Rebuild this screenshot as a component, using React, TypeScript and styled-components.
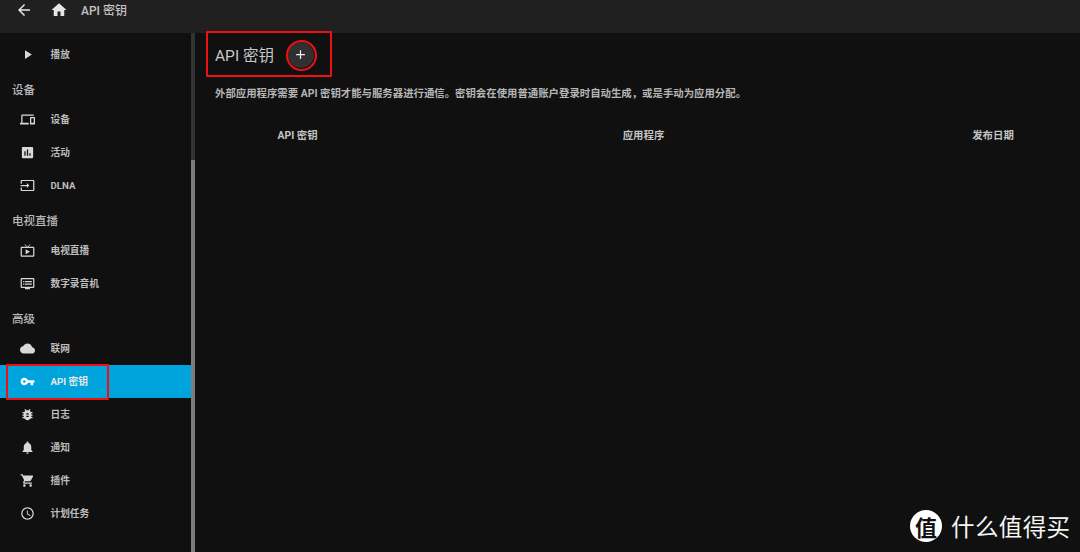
import React from "react";
import styled, { createGlobalStyle } from "styled-components";

const Global = createGlobalStyle`
  html, body { margin: 0; padding: 0; background: #101010; }
  body { font-family: Roboto, "Noto Sans CJK SC", sans-serif; color: #d0d0d0; overflow: hidden; }
`;

const Page = styled.div`
  position: relative;
  width: 1080px;
  height: 552px;
  overflow: hidden;
  display: flex;
  flex-direction: column;
  background: #101010;
`;

const TopBar = styled.header`
  height: 33px;
  flex: none;
  background: #202020;
  display: flex;
  align-items: flex-start;
  padding: 1px 0 0 15px;
  box-sizing: border-box;
`;

const BarIcon = styled.svg`
  width: 18px;
  height: 18px;
  fill: #e6e6e6;
  display: block;
  flex: none;
`;

const HomeIcon = styled(BarIcon)`
  margin-left: 17px;
`;

const BarTitle = styled.span`
  margin: 1px 0 0 13px;
  font-size: 12px;
  line-height: 18px;
  font-weight: 500;
  color: #c4c4c4;
`;

const Body = styled.div`
  flex: 1;
  display: flex;
  min-height: 0;
`;

const Sidebar = styled.nav`
  width: 195px;
  flex: none;
  position: relative;
  padding-top: 4.5px;
  padding-right: 4px;
  box-sizing: border-box;
`;

const Track = styled.div`
  position: absolute;
  top: 0;
  right: 0.5px;
  bottom: 0;
  width: 3.5px;
  background: #333333;
`;

const Thumb = styled.div`
  position: absolute;
  top: 127px;
  bottom: 0;
  right: 0.5px;
  width: 3.5px;
  background: #7c7c7c;
`;

const Row = styled.div<{ $active?: boolean }>`
  height: 33px;
  display: flex;
  align-items: center;
  background: ${(p) => (p.$active ? "#00a4dc" : "transparent")};
  color: ${(p) => (p.$active ? "#e8e8e8" : "#bdbdbd")};
  font-size: 9.7px;
  font-weight: 700;
  padding-left: 20px;
`;

const RowIcon = styled.svg<{ $active?: boolean }>`
  width: 15px;
  height: 15px;
  fill: ${(p) => (p.$active ? "#ffffff" : "#d8d8d8")};
  flex: none;
  margin-right: 15.5px;
`;

const Section = styled.div`
  height: 32px;
  padding: 12.5px 0 0 12px;
  box-sizing: border-box;
  font-size: 11.5px;
  line-height: 15px;
  font-weight: 500;
  color: #b8b8b8;
`;

const Main = styled.main`
  flex: 1;
  padding: 0 0 0 20px;
  min-width: 0;
`;

const TitleRow = styled.div`
  display: flex;
  align-items: center;
  height: 43px;
`;

const Title = styled.h1`
  margin: -2px 0 0;
  font-size: 15.5px;
  font-weight: 400;
  color: #c8c8c8;
`;

const AddButton = styled.button`
  width: 26px;
  height: 26px;
  margin-left: 14px;
  border: 0;
  border-radius: 50%;
  background: #303030;
  display: flex;
  align-items: center;
  justify-content: center;
  padding: 0;
`;

const AddIcon = styled.svg`
  width: 15px;
  height: 15px;
  fill: #eeeeee;
`;

const Desc = styled.p`
  margin: 9.5px 0 0;
  font-size: 10.4px;
  line-height: 16px;
  font-weight: 700;
  color: #b6b6b6;
  white-space: nowrap;
`;

const TableHead = styled.div`
  display: grid;
  grid-template-columns: 165px 527px 172px;
  margin-top: 27px;
  font-size: 10.4px;
  line-height: 14px;
  font-weight: 700;
  color: #c4c4c4;
`;

const HeadCell = styled.div`
  text-align: center;
`;

const Annotation = styled.div<{ $x: number; $y: number; $w: number; $h: number; $round?: boolean }>`
  position: absolute;
  left: ${(p) => p.$x}px;
  top: ${(p) => p.$y}px;
  width: ${(p) => p.$w}px;
  height: ${(p) => p.$h}px;
  box-sizing: border-box;
  border: 2px solid #ee1111;
  border-radius: ${(p) => (p.$round ? "50%" : "1px")};
`;

const Watermark = styled.div`
  position: absolute;
  left: 910px;
  top: 509px;
  display: flex;
  align-items: center;
  gap: 9px;
`;

const LogoMark = styled.div`
  width: 32px;
  height: 32px;
  border-radius: 50%;
  background: #fff;
  color: #111;
  display: flex;
  align-items: center;
  justify-content: center;
  font-size: 22px;
  font-weight: 700;
  font-family: "Noto Sans CJK SC", sans-serif;
`;

const LogoText = styled.div`
  font-size: 23.5px;
  letter-spacing: 0.4px;
  color: #f4f4f4;
  font-family: "Noto Sans CJK SC", sans-serif;
  font-weight: 400;
`;

const icons: Record<string, string> = {
  play: "M8 5v14l11-7z",
  devices: "M4 6h18V4H4c-1.1 0-2 .9-2 2v11H0v3h14v-3H4V6zm19 2h-6c-.55 0-1 .45-1 1v10c0 .55.45 1 1 1h6c.55 0 1-.45 1-1V9c0-.55-.45-1-1-1zm-1 9h-4v-7h4v7z",
  assess: "M19 3H5c-1.1 0-2 .9-2 2v14c0 1.1.9 2 2 2h14c1.1 0 2-.9 2-2V5c0-1.1-.9-2-2-2zM9 17H7v-7h2v7zm4 0h-2V7h2v10zm4 0h-2v-4h2v4z",
  input: "M21 3.01H3c-1.1 0-2 .9-2 2V9h2V4.99h18v14.03H3V15H1v4.01c0 1.1.9 1.98 2 1.98h18c1.1 0 2-.88 2-1.98v-14c0-1.11-.9-2-2-2zM11 16l4-4-4-4v3H1v2h10v3z",
  tv: "M21 6h-7.59l3.29-3.29L16 2l-4 4-4-4-.71.71L10.59 6H3c-1.1 0-2 .89-2 2v12c0 1.1.9 2 2 2h18c1.1 0 2-.9 2-2V8c0-1.11-.9-2-2-2zm0 14H3V8h18v12zM9 10v8l7-4z",
  dvr: "M21 3H3c-1.1 0-2 .9-2 2v12c0 1.1.9 2 2 2h5v2h8v-2h5c1.1 0 1.99-.9 1.99-2L23 5c0-1.1-.9-2-2-2zm0 14H3V5h18v12zm-2-9H8v2h11V8zm0 4H8v2h11v-2zM7 8H5v2h2V8zm0 4H5v2h2v-2z",
  cloud: "M19.35 10.04C18.67 6.59 15.64 4 12 4 9.11 4 6.6 5.64 5.35 8.04 2.34 8.36 0 10.91 0 14c0 3.31 2.69 6 6 6h13c2.76 0 5-2.24 5-5 0-2.64-2.05-4.78-4.65-4.96z",
  key: "M12.65 10C11.83 7.67 9.61 6 7 6c-3.31 0-6 2.69-6 6s2.69 6 6 6c2.61 0 4.83-1.67 5.65-4H17v4h4v-4h2v-4H12.65zM7 14c-1.1 0-2-.9-2-2s.9-2 2-2 2 .9 2 2-.9 2-2 2z",
  bug: "M20 8h-2.81c-.45-.78-1.07-1.45-1.82-1.96L17 4.41 15.59 3l-2.17 2.17C12.96 5.06 12.49 5 12 5c-.49 0-.96.06-1.41.17L8.41 3 7 4.41l1.62 1.63C7.88 6.55 7.26 7.22 6.81 8H4v2h2.09c-.05.33-.09.66-.09 1v1H4v2h2v1c0 .34.04.67.09 1H4v2h2.81c1.04 1.79 2.97 3 5.19 3s4.15-1.21 5.19-3H20v-2h-2.09c.05-.33.09-.66.09-1v-1h2v-2h-2v-1c0-.34-.04-.67-.09-1H20V8zm-6 8h-4v-2h4v2zm0-4h-4v-2h4v2z",
  bell: "M12 22c1.1 0 2-.9 2-2h-4c0 1.1.89 2 2 2zm6-6v-5c0-3.07-1.64-5.64-4.5-6.32V4c0-.83-.67-1.5-1.5-1.5s-1.5.67-1.5 1.5v.68C7.63 5.36 6 7.92 6 11v5l-2 2v1h16v-1l-2-2z",
  cart: "M7 18c-1.1 0-1.99.9-1.99 2S5.9 22 7 22s2-.9 2-2-.9-2-2-2zM1 2v2h2l3.6 7.59-1.35 2.45c-.16.28-.25.61-.25.96 0 1.1.9 2 2 2h12v-2H7.42c-.14 0-.25-.11-.25-.25l.03-.12.9-1.63h7.45c.75 0 1.41-.41 1.75-1.03l3.58-6.49c.08-.14.12-.31.12-.48 0-.55-.45-1-1-1H5.21l-.94-2H1zm16 16c-1.1 0-1.99.9-1.99 2s.89 2 1.99 2 2-.9 2-2-.9-2-2-2z",
  clock: "M11.99 2C6.47 2 2 6.48 2 12s4.47 10 9.99 10C17.52 22 22 17.52 22 12S17.52 2 11.99 2zM12 20c-4.42 0-8-3.58-8-8s3.58-8 8-8 8 3.58 8 8-3.58 8-8 8zm.5-13H11v6l5.25 3.15.75-1.23-4.5-2.67z",
};

type Item = { section: string } | { icon: string; label: string; active?: boolean };

const items: Item[] = [
  { icon: "play", label: "播放" },
  { section: "设备" },
  { icon: "devices", label: "设备" },
  { icon: "assess", label: "活动" },
  { icon: "input", label: "DLNA" },
  { section: "电视直播" },
  { icon: "tv", label: "电视直播" },
  { icon: "dvr", label: "数字录音机" },
  { section: "高级" },
  { icon: "cloud", label: "联网" },
  { icon: "key", label: "API 密钥", active: true },
  { icon: "bug", label: "日志" },
  { icon: "bell", label: "通知" },
  { icon: "cart", label: "插件" },
  { icon: "clock", label: "计划任务" },
];

export default function App() {
  return (
    <Page>
      <Global />
      <TopBar>
        <BarIcon viewBox="0 0 24 24">
          <path d="M20 11H7.83l5.59-5.59L12 4l-8 8 8 8 1.41-1.41L7.83 13H20v-2z" />
        </BarIcon>
        <HomeIcon viewBox="0 0 24 24">
          <path d="M10 20v-6h4v6h5v-8h3L12 3 2 12h3v8z" />
        </HomeIcon>
        <BarTitle>API 密钥</BarTitle>
      </TopBar>
      <Body>
        <Sidebar>
          {items.map((it, i) =>
            "section" in it ? (
              <Section key={i}>{it.section}</Section>
            ) : (
              <Row key={i} $active={it.active}>
                <RowIcon viewBox="0 0 24 24" $active={it.active}>
                  <path d={icons[it.icon]} />
                </RowIcon>
                {it.label}
              </Row>
            )
          )}
          <Track />
          <Thumb />
        </Sidebar>
        <Main>
          <TitleRow>
            <Title>API 密钥</Title>
            <AddButton aria-label="add">
              <AddIcon viewBox="0 0 24 24">
                <path d="M19 13h-6v6h-2v-6H5v-2h6V5h2v6h6v2z" />
              </AddIcon>
            </AddButton>
          </TitleRow>
          <Desc>外部应用程序需要 API 密钥才能与服务器进行通信。密钥会在使用普通账户登录时自动生成，或是手动为应用分配。</Desc>
          <TableHead>
            <HeadCell>API 密钥</HeadCell>
            <HeadCell>应用程序</HeadCell>
            <HeadCell>发布日期</HeadCell>
          </TableHead>
        </Main>
      </Body>
      <Annotation $x={206} $y={31} $w={126} $h={46} />
      <Annotation $x={286} $y={40} $w={31} $h={31} $round />
      <Annotation $x={6} $y={364} $w={103} $h={36} />
      <Watermark>
        <LogoMark>值</LogoMark>
        <LogoText>什么值得买</LogoText>
      </Watermark>
    </Page>
  );
}
